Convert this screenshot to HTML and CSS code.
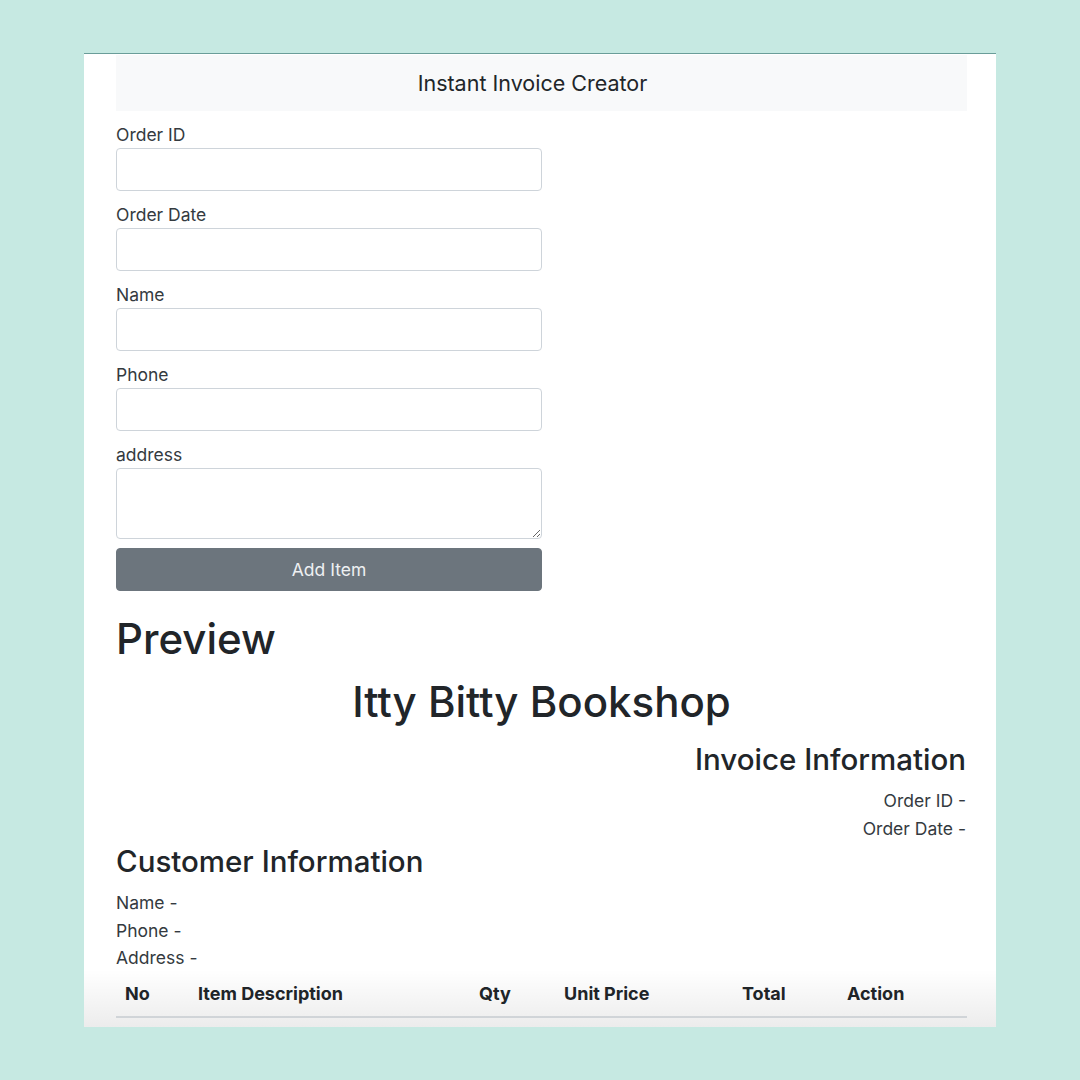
FILE: index.html
```html
<!DOCTYPE html>
<html lang="en">
<head>
<meta charset="utf-8">
<title>Instant Invoice Creator</title>
<link rel="stylesheet" href="styles.css">
</head>
<body>
<div class="card">
  <nav class="navbar"><span class="brand">Instant Invoice Creator</span></nav>
  <form class="form">
    <div class="group">
      <label class="label">Order ID</label>
      <input class="control" type="text">
    </div>
    <div class="group">
      <label class="label">Order Date</label>
      <input class="control" type="text">
    </div>
    <div class="group">
      <label class="label">Name</label>
      <input class="control" type="text">
    </div>
    <div class="group">
      <label class="label">Phone</label>
      <input class="control" type="text">
    </div>
    <div class="group">
      <label class="label">address</label>
      <textarea class="control area"></textarea>
    </div>
    <button class="btn" type="button">Add Item</button>
  </form>
  <h1 class="preview">Preview</h1>
  <h1 class="shop">Itty Bitty Bookshop</h1>
  <h3 class="section right">Invoice Information</h3>
  <div class="lines right first">
    <div>Order ID -</div>
    <div>Order Date -</div>
  </div>
  <h3 class="section cust">Customer Information</h3>
  <div class="lines cust-lines">
    <div>Name -</div>
    <div>Phone -</div>
    <div>Address -</div>
  </div>
  <table class="table">
    <thead>
      <tr>
        <th class="c-no">No</th>
        <th class="c-desc">Item Description</th>
        <th class="c-qty">Qty</th>
        <th class="c-unit">Unit Price</th>
        <th class="c-total">Total</th>
        <th class="c-action">Action</th>
      </tr>
    </thead>
  </table>
</div>
</body>
</html>
```
FILE: styles.css
```css
* { box-sizing: border-box; }
html, body { margin: 0; padding: 0; }
body {
  background: #c6e9e2;
  font-family: Inter, "Noto Sans", sans-serif;
  color: #212529;
  padding-top: 53px;
}
.card {
  position: relative;
  width: 912px;
  height: 974px;
  margin-left: 84px;
  background: #ffffff;
  border-top: 1px solid #6a9d99;
  padding: 1px 29px 0 32px;
  overflow: hidden;
}
.card::after {
  content: "";
  position: absolute;
  left: 0; right: 0; bottom: 0;
  height: 58px;
  background: linear-gradient(rgba(0,0,0,0), rgba(0,0,0,0.075));
  pointer-events: none;
}
.navbar {
  height: 56px;
  background: #f8f9fa;
  display: flex;
  align-items: center;
  justify-content: center;
  padding-right: 18px;
}
.brand { font-size: 21.5px; color: #212529; }
.form {
  width: 426px;
  padding-top: 10px;
  display: flex;
  flex-direction: column;
}
.group { display: flex; flex-direction: column; margin-bottom: 10px; }
.label { font-size: 17.5px; line-height: 27px; color: #343a40; }
.control {
  height: 43px;
  border: 1px solid #ced4da;
  border-radius: 4px;
  font: inherit;
  background: #fff;
}
.area { height: 71px; resize: vertical; }
.group:last-of-type { margin-bottom: 9px; }
.btn {
  height: 43px;
  background: #6c757d;
  color: #eef0f2;
  border: 1px solid #6c757d;
  border-radius: 4px;
  font-family: inherit;
  font-size: 17.5px;
}
.preview {
  margin: 21px 0 0;
  font-size: 42px;
  line-height: 54px;
  font-weight: 500;
}
.shop {
  margin: 9px 0 0;
  font-size: 42px;
  line-height: 54px;
  font-weight: 500;
  text-align: center;
}
.section {
  margin: 12px 0 0;
  font-size: 29.5px;
  line-height: 36px;
  font-weight: 500;
}
.right { text-align: right; padding-right: 1px; }
.lines { font-size: 17.5px; line-height: 28px; color: #343a40; }
.first { margin-top: 10px; }
.section.cust { margin-top: 0; }
.cust-lines { margin-top: 10px; line-height: 27.5px; }
.table {
  margin-top: 0;
  width: 851px;
  border-collapse: collapse;
  table-layout: fixed;
}
.table th {
  height: 45px;
  padding: 0 9px;
  text-align: left;
  font-size: 18px;
  font-weight: 700;
  border-bottom: 2px solid #dee2e6;
  vertical-align: middle;
}
.c-no { width: 73px; }
.c-desc { width: 281px; }
.c-qty { width: 85px; }
.c-unit { width: 178px; }
.c-total { width: 105px; }
.c-action { width: 129px; }
```
